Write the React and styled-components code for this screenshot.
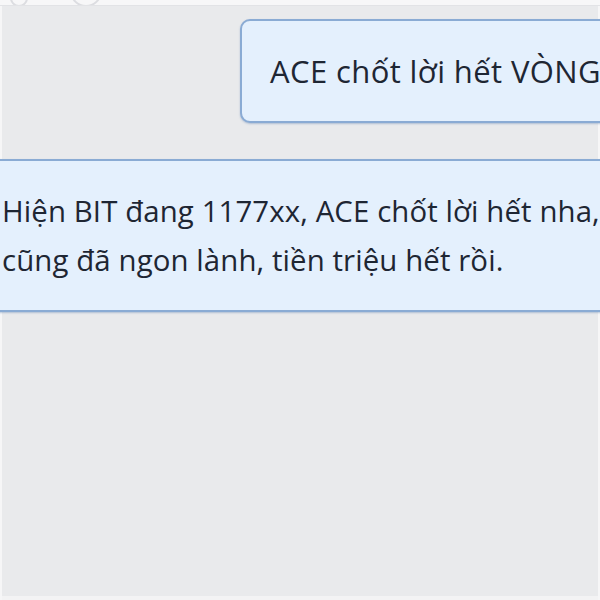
import React from "react";
import styled, { createGlobalStyle } from "styled-components";

const GlobalStyle = createGlobalStyle`
  html, body {
    margin: 0;
    padding: 0;
    background: #e9eaec;
  }
`;

const Screen = styled.div`
  width: 600px;
  height: 600px;
  overflow: hidden;
  background: #e9eaec;
  font-family: "Open Sans", "Noto Sans", sans-serif;
  display: flex;
  flex-direction: column;
  box-shadow: inset 2px 0 0 #f6f6f7, inset -2px 0 0 #f6f6f7, inset 0 -4px 0 #f3f3f4;
`;

const TopStrip = styled.div`
  height: 5px;
  flex-shrink: 0;
  background: #f7f7f8;
  border-bottom: 1px solid #e2e3e6;
  display: flex;
  gap: 42px;
  padding-left: 10px;
  overflow: hidden;
`;

const AvatarStub = styled.span`
  width: ${(p) => p.size}px;
  height: ${(p) => p.size}px;
  margin-top: -${(p) => p.size - 3}px;
  border-radius: 50%;
  border: 2px solid #dcdde1;
  flex-shrink: 0;
`;

const Messages = styled.div`
  display: flex;
  flex-direction: column;
  padding-top: 13px;
  gap: 36px;
`;

const Bubble = styled.div`
  box-sizing: border-box;
  background: #e4f0fd;
  border: 2px solid #8aabd4;
  border-radius: 10px;
  box-shadow: 0 1px 2px rgba(70, 110, 165, 0.35);
  padding: 26px 28px 25px;
  color: #1e2633;
  font-size: ${(p) => p.fontSize}px;
  letter-spacing: ${(p) => p.spacing}px;
  line-height: 49px;
  white-space: nowrap;
  align-self: flex-start;
  margin-left: ${(p) => p.offset}px;
  width: ${(p) => p.width}px;
`;

const Line = styled.div`
  white-space: nowrap;
`;

export default function App() {
  return (
    <>
      <GlobalStyle />
      <Screen>
        <TopStrip>
          <AvatarStub size={14} />
          <AvatarStub size={28} />
        </TopStrip>
        <Messages>
          <Bubble offset={240} width={460} fontSize={31} spacing={0.4}>
            <Line>ACE chốt lời hết VÒNG</Line>
          </Bubble>
          <Bubble offset={-28} width={720} fontSize={29.4} spacing={0.1}>
            <Line>Hiện BIT đang 1177xx, ACE chốt lời hết nha,</Line>
            <Line>cũng đã ngon lành, tiền triệu hết rồi.</Line>
          </Bubble>
        </Messages>
      </Screen>
    </>
  );
}
